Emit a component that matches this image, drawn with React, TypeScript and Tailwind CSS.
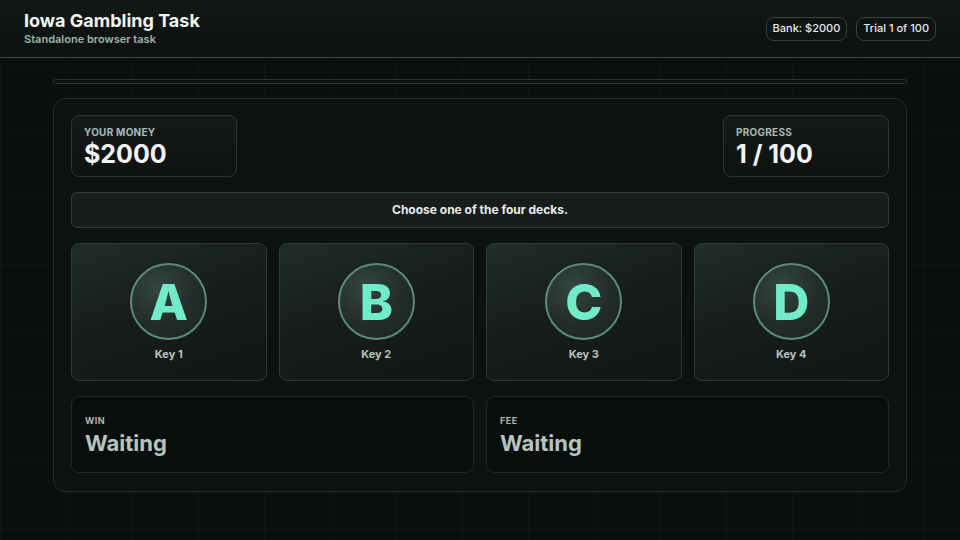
import React from "react";

const decks = [
  { letter: "A", key: "Key 1" },
  { letter: "B", key: "Key 2" },
  { letter: "C", key: "Key 3" },
  { letter: "D", key: "Key 4" },
];

function StatCard({ label, value }: { label: string; value: string }) {
  return (
    <div className="w-[166px] h-[62px] rounded-lg border border-[#2b3733] bg-gradient-to-b from-[#151a18] to-[#0e1312] px-3 pt-[11px]">
      <div className="text-[10px] font-bold tracking-wide text-[#a9bab3] leading-none">
        {label}
      </div>
      <div className="mt-[5px] text-[25px] font-bold text-[#f2f5f3] leading-none">
        {value}
      </div>
    </div>
  );
}

function DeckCard({ letter, keyLabel }: { letter: string; keyLabel: string }) {
  return (
    <button className="flex flex-col items-center h-[138px] rounded-lg border border-[#2f3b37] bg-[linear-gradient(160deg,#202d29_0%,#171d1b_45%,#111614_100%)] pt-[19px]">
      <div className="flex items-center justify-center size-[77px] rounded-full border-2 border-[#5a8b7c] bg-[radial-gradient(circle_at_35%_30%,#34463f_0%,#222c29_55%,#1b2220_100%)]">
        <span className="text-[50px] font-extrabold text-[#72ebc9] leading-none">
          {letter}
        </span>
      </div>
      <span className="mt-[6px] text-[11px] font-bold text-[#b7c2be]">
        {keyLabel}
      </span>
    </button>
  );
}

function FeedbackCard({ label }: { label: string }) {
  return (
    <div className="h-[77px] rounded-lg border border-[#1f2826] bg-[#090e0d] px-[13px] pt-[19px]">
      <div className="text-[9px] font-bold tracking-wider text-[#aab6b2] leading-none">
        {label}
      </div>
      <div className="mt-[7px] text-[22px] font-bold text-[#b6c3be] leading-none">
        Waiting
      </div>
    </div>
  );
}

export default function App() {
  return (
    <div
      className="w-[960px] h-[540px] overflow-hidden bg-[#0a0f0e] text-white bg-[linear-gradient(rgba(255,255,255,0.025)_1px,transparent_1px),linear-gradient(90deg,rgba(255,255,255,0.025)_1px,transparent_1px)] bg-[size:66px_66px]"
      style={{ fontFamily: "Inter, 'Noto Sans', sans-serif" }}
    >
      <header className="flex items-center justify-between h-[58px] px-6 border-b border-[#3a4a45] bg-gradient-to-b from-[#121816] to-[#0c1110]">
        <div>
          <h1 className="text-[18px] font-bold leading-tight text-[#f2f5f3]">
            Iowa Gambling Task
          </h1>
          <p className="text-[11px] font-semibold text-[#9db3aa] leading-tight">
            Standalone browser task
          </p>
        </div>
        <div className="flex gap-[9px]">
          <span className="flex items-center h-[24px] px-[6px] rounded-lg border border-[#34413d] bg-[#0f1413] text-[11px] font-medium text-[#e6ebe9]">
            Bank: $2000
          </span>
          <span className="flex items-center h-[24px] px-[6px] rounded-lg border border-[#34413d] bg-[#0f1413] text-[11px] font-medium text-[#e6ebe9]">
            Trial 1 of 100
          </span>
        </div>
      </header>

      <main className="px-[53px] pt-[21px]">
        <div className="h-[5px] rounded-full border border-[#2a3431] bg-[#0d1211]" />

        <section className="mt-[14px] rounded-xl border border-[#222c29] bg-[#0c1211] px-[17px] pt-[16px] pb-[18px]">
          <div className="flex justify-between">
            <StatCard label="YOUR MONEY" value="$2000" />
            <StatCard label="PROGRESS" value="1 / 100" />
          </div>

          <div className="mt-[15px] flex items-center justify-center h-[36px] rounded-md border border-[#2f3b37] bg-[#181d1b] text-[12px] font-bold text-[#e8edeb]">
            Choose one of the four decks.
          </div>

          <div className="mt-[15px] grid grid-cols-4 gap-3">
            {decks.map((d) => (
              <DeckCard key={d.letter} letter={d.letter} keyLabel={d.key} />
            ))}
          </div>

          <div className="mt-[15px] grid grid-cols-2 gap-3">
            <FeedbackCard label="WIN" />
            <FeedbackCard label="FEE" />
          </div>
        </section>
      </main>
    </div>
  );
}
